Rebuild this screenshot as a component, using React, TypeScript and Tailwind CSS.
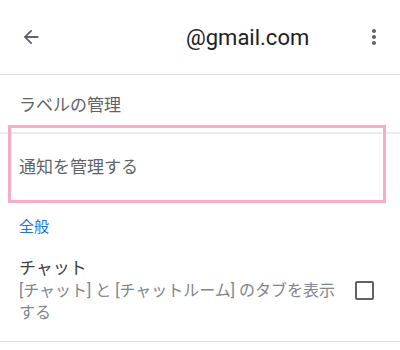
export default function App() {
  return (
    <div
      className="relative h-[350px] w-[400px] overflow-hidden bg-white"
      style={{ fontFamily: 'Roboto, "Noto Sans CJK JP", sans-serif' }}
    >
      {/* App bar */}
      <div className="flex h-[75px] items-center border-b border-[#e3e3e3] pl-[20px] pr-[14px]">
        <svg className="h-[22px] w-[22px] text-[#5f6368]" viewBox="0 0 24 24" fill="currentColor">
          <path d="M20 11H7.83l5.59-5.59L12 4l-8 8 8 8 1.41-1.41L7.83 13H20v-2z" />
        </svg>
        <div className="ml-[144px] flex-1 text-[22px] text-[#202124]">@gmail.com</div>
        <svg className="h-[24px] w-[24px] text-[#5f6368]" viewBox="0 0 24 24" fill="currentColor">
          <path d="M12 8c1.1 0 2-.9 2-2s-.9-2-2-2-2 .9-2 2 .9 2 2 2zm0 2c-1.1 0-2 .9-2 2s.9 2 2 2 2-.9 2-2-.9-2-2-2zm0 6c-1.1 0-2 .9-2 2s.9 2 2 2 2-.9 2-2-.9-2-2-2z" />
        </svg>
      </div>

      {/* Labels */}
      <div className="flex h-[59px] items-center border-b-2 border-[#ececec] pl-[19px] pt-[4px] text-[17px] text-[#5f6368]">
        ラベルの管理
      </div>

      {/* Notifications */}
      <div className="flex h-[60px] items-center pl-[19px] pt-[8px] text-[17px] text-[#5f6368]">
        通知を管理する
      </div>

      {/* Section header */}
      <div className="flex h-[49px] items-end pb-[5px] pl-[19px] text-[15px] text-[#1a73e8]">全般</div>

      {/* Chat row */}
      <div className="flex items-center border-b border-[#e3e3e3] pb-[17px] pl-[19px] pr-[26px] pt-[13px]">
        <div className="w-[330px]">
          <div className="text-[17px] leading-[24px] text-[#3c4043]">チャット</div>
          <div className="text-[16px] leading-[22px] text-[#80868b]">
            [チャット] と [チャットルーム] のタブを表示する
          </div>
        </div>
        <div className="ml-auto h-[19px] w-[19px] rounded-[2px] border-2 border-[#5f6368]" />
      </div>

      {/* Highlight annotation */}
      <div className="pointer-events-none absolute left-[8px] top-[125px] h-[78px] w-[378px] border-[3px] border-[#f9abc9]" />
    </div>
  )
}
